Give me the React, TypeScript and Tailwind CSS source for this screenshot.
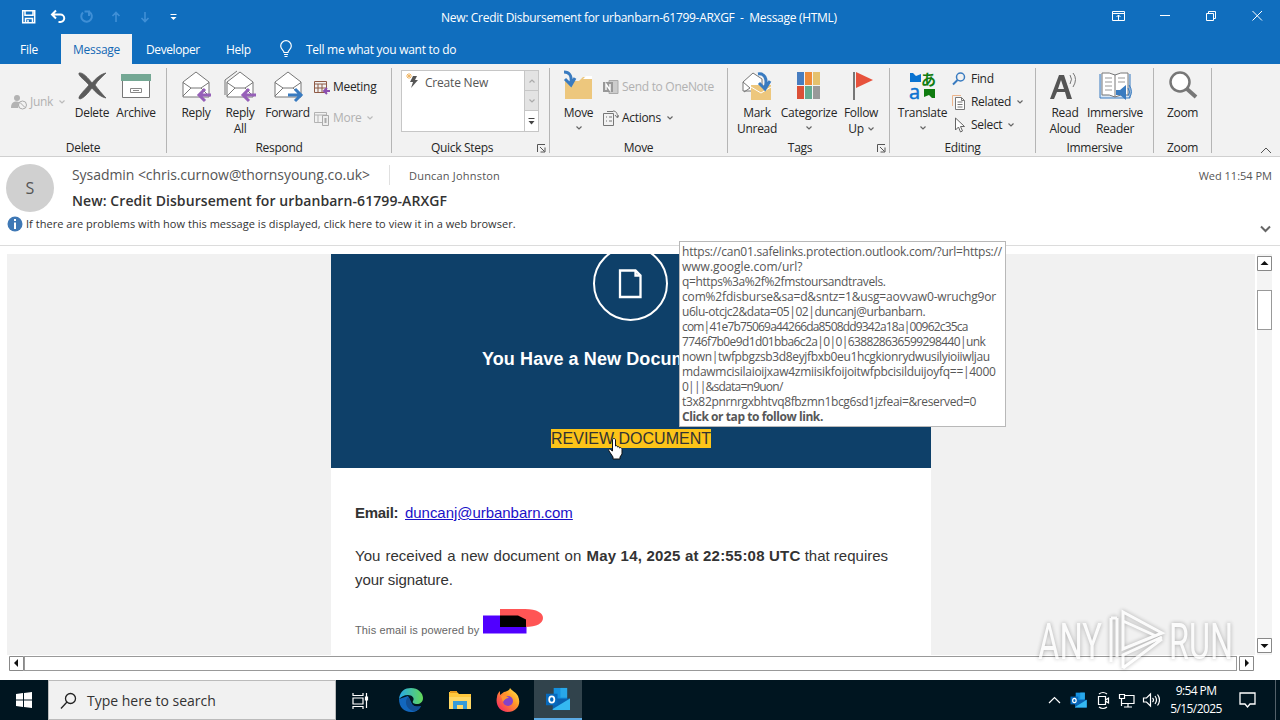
import type { ReactNode } from "react"
import clsx from "clsx"

function Caret({ className }: { className?: string }) {
  return (
    <svg width="6" height="4" viewBox="0 0 6 4" className={className} fill="none" stroke="currentColor" strokeWidth="1.2">
      <path d="M.5.5 3 3 5.5.5" />
    </svg>
  )
}

function Envelope() {
  return (
    <>
      <path d="M3 12 16 2l13 10v15H3z" fill="#fff" stroke="#777" />
      <path d="M3 12.5 11 18h10l8-5.5M3 26l8-8M29 26l-8-8" fill="none" stroke="#777" />
    </>
  )
}

function BigIcon({ children }: { children: ReactNode }) {
  return <svg width="32" height="32" viewBox="0 0 32 32" className="shrink-0 overflow-visible">{children}</svg>
}

function SmallIcon({ children }: { children: ReactNode }) {
  return <svg width="16" height="16" viewBox="0 0 16 16" className="shrink-0" fill="none">{children}</svg>
}

function BigButton({ icon, lines, width, caret }: { icon: ReactNode; lines: string[]; width: string; caret?: "below" | "inline" }) {
  return (
    <button className={clsx("flex shrink-0 flex-col items-center pt-1.5", width)}>
      <BigIcon>{icon}</BigIcon>
      <span className="mt-[3px] flex flex-col items-center whitespace-nowrap leading-4">
        {lines.map((line, i) => (
          <span key={line} className="flex items-center gap-1">
            {line}
            {caret === "inline" && i === lines.length - 1 && <Caret className="text-[#666]" />}
          </span>
        ))}
      </span>
      {caret === "below" && <Caret className="mt-[5px] text-[#666]" />}
    </button>
  )
}

function SmallButton({ icon, label, caret, disabled }: { icon: ReactNode; label: string; caret?: boolean; disabled?: boolean }) {
  return (
    <button className={clsx("flex h-4 items-center gap-[3px] whitespace-nowrap", disabled && "text-[#b1b1b1]")}>
      <SmallIcon>{icon}</SmallIcon>
      {label}
      {caret && <Caret className={clsx("ml-[3px]", disabled ? "text-[#bbb]" : "text-[#666]")} />}
    </button>
  )
}

function Group({ label, width, children, launcher }: { label: string; width: string; children: ReactNode; launcher?: boolean }) {
  return (
    <>
      <section className={clsx("flex h-[92px] shrink-0 flex-col", width)}>
        <div className="flex h-[76px] items-start">{children}</div>
        <div className="flex h-4 items-center">
          <span className={clsx("flex-1 text-center leading-4", launcher && "pr-[5px]")}>{label}</span>
          {launcher && (
            <svg width="9" height="9" viewBox="0 0 9 9" className="mr-[3px]" fill="none" stroke="#555">
              <path d="M.5 8V.5H8M3 3l4.5 4.5M8 3.5V8H3.5" />
            </svg>
          )}
        </div>
      </section>
      <div className="mt-1 h-[85px] w-px shrink-0 bg-[#b5b5b5]" />
    </>
  )
}

function TitleBar() {
  return (
    <div className="flex h-[34px] items-center pl-[21px] text-white">
      <svg width="160" height="18" viewBox="0 0 160 18" fill="none" stroke="#fff" strokeWidth="1.5">
        <path d="M1.7 2.7h12v12h-12zM4 2.7v4.5h8V2.7M4.5 14.5v-4h7v4M7 12v2" />
        <path d="M35 2.5 31 6.5l4 4M31 6.5h8.5a3.5 3.5 0 0 1 0 7.5h-2" strokeWidth="2" />
        <g stroke="#3f8fd6">
          <path d="M62 4.5a5.3 5.3 0 1 0 6.5-.5M68 8V3.5h-4.5" strokeWidth="2" />
          <path d="M95 14V4.5M91.5 8 95 4.5l3.5 3.5M124 4v9.5M120.500 10l3.500 3.500 3.500-3.500" strokeWidth="1.6" />
        </g>
        <path d="M149.500 6.500h6" strokeWidth="1" />
        <path d="m149.500 9 3 3 3-3z" fill="#fff" stroke="none" />
      </svg>
      <div className="mt-0.5 ml-[260px] whitespace-pre text-xs leading-4 tracking-[-0.3px]">New: Credit Disbursement for urbanbarn-61799-ARXGF  -  Message (HTML)</div>
      <svg width="160" height="16" viewBox="0 0 160 16" className="-mt-1 mr-3 ml-auto" fill="none" stroke="#fff">
        <path d="M4.500 4.500h12v9h-12zM4.500 6.500h12M10.500 13V8M8.500 10l2-2 2 2" />
        <path d="M52 8.500h10M98.500 6.500h7v7h-7zM100.500 6V4.500h7v7H106M144.500 4l9.500 9.500M154 4l-9.500 9.500" />
      </svg>
    </div>
  )
}

function TabBar() {
  return (
    <div className="flex h-[30px] items-center text-xs tracking-[-0.28px] text-white">
      <span className="w-[61px] pt-px pl-5">File</span>
      <span className="flex h-full w-[71px] items-center justify-center bg-[#f2f2f2] pt-px text-[#1368b4]">Message</span>
      <span className="w-[94px] pt-px pl-3.5 tracking-[-0.4px]">Developer</span>
      <span className="w-[53px] pt-px">Help</span>
      <svg width="14" height="18" viewBox="0 0 14 18" fill="none" stroke="#fff" strokeWidth="1.2">
        <path d="M5 12.5c0-2-3.300-3-3.300-6.500a5.300 5.300 0 0 1 10.600 0c0 3.500-3.300 4.500-3.300 6.500zM5 14.500h4M5.500 16.500h3" />
      </svg>
      <span className="ml-[13px] pt-px">Tell me what you want to do</span>
    </div>
  )
}

const people = (
  <>
    <circle cx="6" cy="4" r="3" fill="#b3b3b3" />
    <path d="M0 14c0-5 2-6.500 6-6.500l3 1-2 5.500z" fill="#b3b3b3" />
    <circle cx="11.500" cy="11" r="4" fill="#f2f2f2" stroke="#aaa" />
    <path d="m9 8.500 5 5" stroke="#aaa" />
  </>
)

function Ribbon() {
  return (
    <div className="flex h-[93px] border-b border-[#d0d0d0] bg-[#f2f2f2] text-xs tracking-[-0.3px] text-[#262626]">
      <Group label="Delete" width="w-[166px]">
        <div className="w-[70px] pt-[30px] pl-[11px]">
          <SmallButton icon={people} label="Junk" caret disabled />
        </div>
        <BigButton width="w-11" lines={["Delete"]} icon={<path d="M3 3c4-1 9 5 13 10C20 8 25 4 30 3c-4 4-8 7-11 12 3 4 7 9 11 13-5-1-10-5-14-10C12 23 8 28 4 29c-4-1 5-9 9-14C9 10 2 6 3 3z" fill="#5b5b5b" stroke="#5b5b5b" strokeWidth=".8" />} />
        <BigButton width="w-11" lines={["Archive"]} icon={<><path d="M2.500 9.500h27v18h-27z" fill="#fff" stroke="#777" /><path d="M1 4h30v7H1z" fill="#74a894" /><path d="M10.500 18.500h11v4h-11zM13 20.500h6" fill="none" stroke="#888" /></>} />
      </Group>
      <Group label="Respond" width="w-[224px]">
        <div className="flex pl-[7px]">
          <BigButton width="w-11" lines={["Reply"]} icon={<><Envelope /><path d="M31 25H19m6-6-6 6 6 6" stroke="#9660b8" strokeWidth="3" fill="none" /></>} />
          <BigButton width="w-11" lines={["Reply", "All"]} icon={<><path d="M1 25V10L13 1" stroke="#777" fill="none" /><Envelope /><path d="M32 25H19m6-6-6 6 6 6" stroke="#9660b8" strokeWidth="3" fill="none" /></>} />
          <BigButton width="w-[51px]" lines={["Forward"]} icon={<><Envelope /><path d="M16 25h13m-6-6 6 6-6 6" stroke="#397bc0" strokeWidth="3" fill="none" /></>} />
        </div>
        <div className="flex flex-col gap-[15px] pt-[15px] pl-px">
          <SmallButton label="Meeting" icon={<><path d="M.5 2.500h12v11H.5zM.5 5h12M4 5v8M8 5v8M1 9h11" stroke="#8e5a45" /><path d="M16 12h-6m3-3-3 3 3 3" stroke="#8c4fb0" strokeWidth="2" /></>} />
          <SmallButton label="More" caret disabled icon={<><path d="M.5 2.500h12v10H.5zM.5 5h12M4 5v7" stroke="#b3b3b3" /><path d="M8.500 5.500h6v10h-6z" fill="#eee" stroke="#aaa" /><path d="M10.500 8h2v5h-2z" fill="#aaa" /></>} />
        </div>
      </Group>
      <Group label="Quick Steps" width="w-[157px]" launcher>
        <div className="mt-1.5 ml-[9px] flex h-[62px] w-[138px] border border-[#c6c6c6] bg-white">
          <div className="flex h-[23px] flex-1 items-center gap-1.5 pl-[3px] tracking-[-0.2px] text-[#555]">
            <svg width="14" height="17" viewBox="0 0 14 17" className="-mt-1">
              <path d="M4 1v6M1 4h6M2 2l4 4M6 2 2 6" stroke="#efb565" />
              <path d="M8 4h4l-2 4h3l-7 8 2-6H5z" fill="#555" />
            </svg>
            Create New
          </div>
          <div className="flex w-3.5 flex-col border-l border-[#c6c6c6]">
            <span className="flex h-5 items-center justify-center border-b border-[#c6c6c6] bg-[#e3e3e3]"><Caret className="rotate-180 text-[#aaa]" /></span>
            <span className="flex h-5 items-center justify-center border-b border-[#c6c6c6] bg-[#e3e3e3]"><Caret className="text-[#aaa]" /></span>
            <svg width="13" height="20" viewBox="0 0 13 20"><path d="M3.500 7.500h6" stroke="#444" /><path d="M3.500 10h6l-3 3.500z" fill="#444" /></svg>
          </div>
        </div>
      </Group>
      <Group label="Move" width="w-[177px]">
        <BigButton width="w-[53px] pl-1" lines={["Move"]} caret="below" icon={<><path d="M2 11h14l4-4h9v22H2z" fill="#edc77d" /><path d="m20 9 3-3h6v3z" fill="#fff" /><path d="M1 2c5 0 8 3 7 11M2 9l6 6 4-7" stroke="#397bc0" strokeWidth="3" fill="none" /></>} />
        <div className="flex flex-col gap-[15px] pt-[15px]">
          <SmallButton label="Send to OneNote" disabled icon={<><path d="M6 1.500h9v13H6z" fill="#ccc" stroke="#aaa" /><path d="M0 3h10v10H0z" fill="#999" /><path d="M3 11V5l4 6V5" stroke="#fff" strokeWidth="1.4" /></>} />
          <SmallButton label="Actions" caret icon={<><path d="M.5 3.500h10v12H.5zM3 7h1M3 11h1M6 7h3M6 11h3M4 1.500h6M10 1c3 0 4.500 2 4.500 6M12 5l2.500 3L16 5" stroke="#777" /></>} />
        </div>
      </Group>
      <Group label="Tags" width="w-[161px]" launcher>
        <div className="flex pl-1">
          <BigButton width="w-[50px]" lines={["Mark", "Unread"]} icon={<><path d="M2 12 12 3l9 6v12H2z" fill="#fff" stroke="#777" /><path d="m2 12 7 6-6 4" fill="none" stroke="#777" /><path d="M10 15h20v15H10z" fill="#edc77d" /><path d="m10 17 10 6 10-6" fill="none" stroke="#fff" /><path d="M17 4c6-1 10 4 7 14M18 13l6 6 5-8" stroke="#397bc0" strokeWidth="3" fill="none" /></>} />
          <BigButton width="w-[54px]" lines={["Categorize"]} caret="below" icon={<><path d="M4 2h7v13H4z" fill="#477dc0" /><path d="M12 2h7v13h-7z" fill="#ee8b3a" /><path d="M20 2h7v13h-7z" fill="#e5c16d" /><path d="M4 16h7v13H4z" fill="#db5037" /><path d="M12 16h7v13h-7z" fill="#65aa91" /><path d="M20 16h7v13h-7z" fill="#999" /></>} />
          <BigButton width="w-[50px]" lines={["Follow", "Up"]} caret="inline" icon={<><path d="M9 2v28" stroke="#777" strokeWidth="2" /><path d="m11 2 17 8-17 8z" fill="#e7523c" /></>} />
        </div>
      </Group>
      <Group label="Editing" width="w-[145px]">
        <BigButton width="w-[62px] pl-[3px]" lines={["Translate"]} caret="below" icon={<><path d="M3 3h3l3 3 5-2v8H3z" fill="#0a73d1" /><path d="M28 28h-3l-3-3-5 2v-8h11z" fill="#107c10" /><text x="2" y="29" fontSize="20" fill="#0a73d1" stroke="#0a73d1" strokeWidth=".5">a</text><text x="14" y="15" fontSize="15" fontWeight="bold" fill="#107c10" fontFamily="Noto Sans CJK JP, sans-serif">あ</text></>} />
        <div className="flex flex-col gap-[7px] pt-[7px]">
          <SmallButton label="Find" icon={<><circle cx="8.500" cy="6" r="4" stroke="#397bc0" strokeWidth="1.5" /><path d="M5.500 9 1 13.500" stroke="#397bc0" strokeWidth="2" /></>} />
          <SmallButton label="Related" caret icon={<><path d="M.5 12V1.500H9" stroke="#edb58d" /><path d="M3.500 3.500h6l3 3v9h-9zM9.500 3.500v3h3M5.500 8h5M5.500 10.500h5M5.500 13h5" fill="#fff" stroke="#777" /></>} />
          <SmallButton label="Select" caret icon={<path d="M3.500 1v12l3-3 2 5 2-1-2-4.500h4z" fill="#fff" stroke="#666" />} />
        </div>
      </Group>
      <Group label="Immersive" width="w-[117px]">
        <BigButton width="w-[55px] pl-[3px]" lines={["Read", "Aloud"]} icon={<><path d="M1 29 10 5h5l8 24h-5l-2-7H8l-3 7zm8-10h6l-3-9z" fill="#555" fillRule="evenodd" /><path d="M21 5q3 4 0 9M24 3q5 6 0 14" stroke="#777" fill="none" /></>} />
        <BigButton width="w-12" lines={["Immersive", "Reader"]} icon={<><path d="M1 4v24h30V4" fill="#d7e6f5" stroke="#397bc0" /><path d="M3 3q8-1 13 2 5-3 13-2v22q-8-1-13 2-5-3-13-2zM16 5v22" fill="#fff" stroke="#777" /><path d="M6 8h7M6 12h7M6 16h7M6 20h7M19 8h7M19 12h7" stroke="#999" /><path d="M17 20h4l6-5v15l-6-5h-4z" fill="#397bc0" /><path d="M29 18q3 4 0 8M30 15q5 7 0 13" fill="none" stroke="#397bc0" /></>} />
      </Group>
      <Group label="Zoom" width="w-[57px]">
        <BigButton width="w-[57px]" lines={["Zoom"]} icon={<><circle cx="13" cy="12" r="9.500" fill="#fff" stroke="#777" strokeWidth="2.5" /><path d="m20 19 9 8" stroke="#777" strokeWidth="4" /></>} />
      </Group>
      <svg width="12" height="7" viewBox="0 0 12 7" className="mr-2 mb-0.5 ml-auto self-end" fill="none" stroke="#555"><path d="m1 6 5-5 5 5" /></svg>
    </div>
  )
}

function MessageHeader() {
  return (
    <header className="flex h-[89px] flex-col border-b border-[#dcdcdc] text-[#555]">
      <div className="flex h-[57px] shrink-0 pt-[7px] pl-1.5">
        <div className="flex size-12 items-center justify-center rounded-full bg-[#d0d0d0] text-base text-[#555]">S</div>
        <div className="ml-[18px] flex-1">
          <div className="flex h-[22px] items-center">
            <span className="w-[317px] text-sm tracking-[-0.06px] whitespace-nowrap">Sysadmin &lt;chris.curnow@thornsyoung.co.uk&gt;</span>
            <span className="h-5 w-px bg-[#e0e0e0]" />
            <span className="ml-[19px] pt-0.5 text-[11px] tracking-[0.2px]">Duncan Johnston</span>
            <span className="mr-2 ml-auto pt-0.5 text-[11px]">Wed 11:54 PM</span>
          </div>
          <div className="mt-1 text-sm leading-[22px] font-semibold tracking-[0.08px] text-[#333]">New: Credit Disbursement for urbanbarn-61799-ARXGF</div>
        </div>
      </div>
      <div className="flex h-5 items-center gap-[3px] pl-[7px] text-[11px] tracking-[0.03px] text-[#333]">
        <svg width="16" height="16" viewBox="0 0 16 16" className="shrink-0"><circle cx="8" cy="8" r="7.5" fill="#3f78b5" /><path d="M8 6.500V13M8 3v2" stroke="#fff" strokeWidth="2" /></svg>
        <span>If there are problems with how this message is displayed, click here to view it in a web browser.</span>
        <svg width="11" height="8" viewBox="0 0 11 8" className="mt-2.5 mr-[9px] ml-auto" fill="none" stroke="#666" strokeWidth="2"><path d="m1 1.500 4.500 4.500L10 1.500" /></svg>
      </div>
    </header>
  )
}

function MessageBody() {
  return (
    <div className="h-full w-[600px] bg-white font-['Liberation_Sans',sans-serif] text-[#333]">
      <div className="flex h-[214px] flex-col items-center overflow-hidden bg-[#0e4069]">
        <svg width="76" height="76" viewBox="0 0 76 76" className="-mt-2 shrink-0" fill="none" stroke="#fff">
          <circle cx="37.5" cy="37.5" r="36.5" strokeWidth="2" />
          <path d="M27 24.500h15.500l5 5v21.500H27zM42.500 24.500v5h5" strokeWidth="2.3" />
        </svg>
        <div className="mt-[25px] w-full pl-[151px] text-lg leading-6 font-bold tracking-[0.1px] whitespace-nowrap text-white">You Have a New Document</div>
        <a className="mt-[58px] bg-[#fcc419] text-base leading-[19px] whitespace-nowrap text-[#333]">REVIEW DOCUMENT</a>
      </div>
      <div className="pt-[33px] pl-6">
        <div className="flex text-[15px] leading-6"><b className="w-[50px] tracking-[-0.3px]">Email:</b><a className="tracking-[-0.04px] text-[#1a10c8] underline">duncanj@urbanbarn.com</a></div>
        <div className="mt-[19px] text-[15px] leading-6 whitespace-nowrap">
          <p><span className="[word-spacing:1px]">You received a new document on </span><b className="tracking-[0.2px]">May 14, 2025 at 22:55:08 UTC</b><span> that requires</span></p>
          <p className="tracking-[-0.1px]">your signature.</p>
        </div>
        <div className="mt-4 flex items-end text-[11px] leading-4 text-[#666]">
          <span className="mb-px w-32 tracking-[0.14px] whitespace-nowrap">This email is powered by</span>
          <svg width="62" height="27" viewBox="0 0 62 27" className="mb-1">
            <path d="M0 7.500h43.500v18H0z" fill="#5000ff" />
            <path d="M17 1h25c12 0 18 4 18 9s-6 9-18 9H17z" fill="#ff5555" />
            <path d="M17 7.500h18l8 4V19H17z" fill="#000" />
          </svg>
        </div>
      </div>
    </div>
  )
}

const arrowPaths = {
  up: "M3.5 9h8l-4-4z",
  down: "M3.5 6h8l-4 4z",
  left: "M9 3v8L5 7z",
  right: "M6 3v8l4-4z",
}

function ScrollArrow({ dir }: { dir: keyof typeof arrowPaths }) {
  return (
    <svg width="15" height="15" viewBox="0 0 15 15" className="shrink-0">
      <path d="M.5.5h14v14H.5z" fill="#fff" stroke="#888" />
      <path d={arrowPaths[dir]} fill="#111" />
    </svg>
  )
}

function ReadingPane() {
  return (
    <>
      <div className="mt-2 ml-[7px] flex h-[401px]">
        <div className="flex w-[1248px] overflow-hidden bg-[#f1f1f1] pl-[324px]"><MessageBody /></div>
        <div className="ml-0.5 flex w-[15px] flex-col bg-[#f4f4f4] pt-0.5">
          <ScrollArrow dir="up" />
          <div className="mt-[19px] h-10 border border-[#999] bg-white" />
          <div className="mt-auto mb-0.5 h-[15px]"><ScrollArrow dir="down" /></div>
        </div>
      </div>
      <div className="flex h-[25px] items-start pt-px pl-[9px]">
        <ScrollArrow dir="left" />
        <div className="mr-0.5 h-[15px] w-[1213px] border border-[#999] bg-white" />
        <ScrollArrow dir="right" />
      </div>
    </>
  )
}

const urlLines = [
  { text: "https://can01.safelinks.protection.outlook.com/?url=https://", spacing: "tracking-[-0.22px]" },
  { text: "www.google.com/url?", spacing: "tracking-normal" },
  { text: "q=https%3a%2f%2fmstoursandtravels.", spacing: "tracking-[-0.38px]" },
  { text: "com%2fdisburse&sa=d&sntz=1&usg=aovvaw0-wruchg9or", spacing: "tracking-[-0.16px]" },
  { text: "u6lu-otcjc2&data=05|02|duncanj@urbanbarn.", spacing: "tracking-[-0.44px]" },
  { text: "com|41e7b75069a44266da8508dd9342a18a|00962c35ca", spacing: "tracking-[-0.82px]" },
  { text: "7746f7b0e9d1d01bba6c2a|0|0|638828636599298440|unk", spacing: "tracking-[-0.62px]" },
  { text: "nown|twfpbgzsb3d8eyjfbxb0eu1hcgkionrydwusilyioiiwljau", spacing: "tracking-[-0.36px]" },
  { text: "mdawmcisilaioijxaw4zmiisikfoijoitwfpbcisilduijoyfq==|4000", spacing: "tracking-[-0.28px]" },
  { text: "0|||&sdata=n9uon/", spacing: "tracking-[-0.76px]" },
  { text: "t3x82pnrnrgxbhtvq8fbzmn1bcg6sd1jzfeai=&reserved=0", spacing: "tracking-[-0.35px]" },
]

function LinkTooltip() {
  return (
    <div className="absolute top-[241px] left-[679px] h-[186px] w-[327px] border border-[#b8b8b8] bg-white pt-0.5 pl-0.5 text-xs leading-[15px] whitespace-nowrap text-[#575757]">
      {urlLines.map(line => <div key={line.text} className={line.spacing}>{line.text}</div>)}
      <div className="font-bold tracking-[-0.43px]">Click or tap to follow link.</div>
    </div>
  )
}

function Watermark() {
  return (
    <svg width="200" height="64" viewBox="0 0 200 64" className="absolute top-[608px] left-[1036px] overflow-visible opacity-75 drop-shadow-[0_0_2px_#0006]" fill="none" stroke="#fff" strokeWidth="3">
      <text x="2" y="51" fontSize="50" textLength="64" lengthAdjust="spacingAndGlyphs" fill="#fff" stroke="none" fontFamily="Roboto, sans-serif">ANY</text>
      <text x="133" y="51" fontSize="50" textLength="64" lengthAdjust="spacingAndGlyphs" fill="#fff" stroke="none" fontFamily="Roboto, sans-serif">RUN</text>
      <path d="M87 4v37l39-16zM87 13l33 15M75 10v44M81 10v39M75 10h6M87 60V47l39-18M87 60l39-29" />
    </svg>
  )
}

function OutlookIcon() {
  return (
    <>
      <path d="M8 1h14v20H8z" fill="#1490df" />
      <path d="M15 1h7v10h-7z" fill="#28a8ea" />
      <path d="M7 12h18v12H7z" fill="#0a61b0" />
      <path d="m7 23 18-11v12H7z" fill="#35b8f1" />
      <path d="M0 7h12v12H0z" fill="#0669bc" />
      <ellipse cx="6" cy="13" rx="2.7" ry="3.3" fill="none" stroke="#fff" strokeWidth="1.8" />
    </>
  )
}

function Taskbar() {
  return (
    <footer className="flex h-10 items-center bg-[#001520] text-white">
      <div className="flex w-12 justify-center">
        <svg width="16" height="16" viewBox="0 0 16 16" fill="#fff"><path d="m0 2 7-1v6.500H0zM8 1l8-1v7.500H8zM0 8.500h7V15l-7-1zM8 8.500h8V16l-8-1z" /></svg>
      </div>
      <div className="flex h-full w-72 items-center gap-2.5 border border-[#bbb] bg-[#f1f1f1] pt-px pl-[11px] text-sm text-[#333]">
        <svg width="17" height="18" viewBox="0 0 17 18" fill="none" stroke="#222" strokeWidth="1.3"><circle cx="10.500" cy="6.500" r="5" /><path d="m7 10-6 6.500" /></svg>
        Type here to search
      </div>
      <div className="flex w-12 justify-center">
        <svg width="17" height="17" viewBox="0 0 17 17" fill="none" stroke="#fff" strokeWidth="1.2"><path d="M1 1v2.500h10V1M1 6h10v6H1zM1 17v-2.500h10V17M14.500 1v15M13.500 5h2v3h-2z" /></svg>
      </div>
      <div className="flex w-[54px] justify-center">
        <svg width="24" height="24" viewBox="0 0 24 24">
          <defs>
            <linearGradient id="edge" x1="0" y1="0" x2="1" y2="0"><stop stopColor="#26a9eb" /><stop offset="1" stopColor="#63d957" /></linearGradient>
          </defs>
          <path d="M0 11c0 8 5 13 12 13 5 0 8-2 10-6-3 1-7 1-9-2L9 8z" fill="#1267be" />
          <path d="M0 11C1 3 6 0 12 0c7 0 12 5 12 10 0 4-3 6-6 6-3 0-5-1-4-3 2-3-1-6-5-6-4 0-7 2-9 4z" fill="url(#edge)" />
          <path d="M9 9c-4 4-2 12 5 14 4 0 6-2 8-5-4 2-9 0-10-3-1-2 0-4-3-6z" fill="#124f94" />
        </svg>
      </div>
      <div className="flex w-11 justify-center">
        <svg width="22" height="20" viewBox="0 0 22 20"><path d="M0 2h8l2 2h12v15H0z" fill="#ffc83d" /><path d="M0 7h22v12H0z" fill="#ffd866" /><path d="M4 19v-8h14v8h-4v-4H8v4z" fill="#369bd8" /><path d="M1 1h7v2H1z" fill="#e69a1c" /></svg>
      </div>
      <div className="flex w-[52px] justify-center">
        <svg width="24" height="24" viewBox="0 0 24 24">
          <defs>
            <linearGradient id="fox" x1="1" y1="0" x2="0" y2="1"><stop stopColor="#fff44f" /><stop offset=".4" stopColor="#ff9a28" /><stop offset="1" stopColor="#f5156c" /></linearGradient>
          </defs>
          <path d="M14 0c2 3 6 4 8 8 4 9-2 16-10 16S-1 17 1 9c0-2 1-4 3-6v4l4-3c3-1 5-1 6-4z" fill="url(#fox)" />
          <circle cx="12" cy="13" r="5" fill="#8542c8" />
          <path d="M5 8c3-2 6 0 8 2-3 0-5 2-6 4z" fill="#ff9630" />
        </svg>
      </div>
      <div className="flex h-full w-12 items-center justify-center border-b-2 border-[#5cabe5] bg-[#31434c]">
        <svg width="24" height="24" viewBox="0 0 25 25"><OutlookIcon /></svg>
      </div>
      <div className="ml-auto flex items-center">
        <svg width="112" height="20" viewBox="0 0 112 20" fill="none" stroke="#fff" strokeWidth="1.2">
          <path d="m1 13 5.500-5.500L12 13" />
          <g transform="translate(22.500 2) scale(.65)" stroke="none"><OutlookIcon /></g>
          <path d="M50.500 6.500h7v8h-7zM57.500 10l3-2v5l-3-2M51 4q4-3 8 0M51 17q4 3 8 0" />
          <path d="M76 5.500h10v8H73.500V10M80 13.500V17M76 17h8M71.500 4.500h5v4h-5zM73.500 9v7" />
          <path d="M95.500 8h3l4-4v12l-4-4h-3zM104.500 8q2 2 0 4M107 6q3 4 0 8M109.500 4.500q4 5.500 0 11" />
        </svg>
        <div className="w-[68px] pl-1 text-center text-xs leading-[18px] tracking-[-0.6px]">9:54 PM<br />5/15/2025</div>
        <svg width="18" height="17" viewBox="0 0 18 17" className="mr-[18px] ml-[11px]" fill="none" stroke="#fff" strokeWidth="1.3"><path d="M1 1h15v11h-5l-2.500 3L6 12H1z" /></svg>
        <div className="h-10 w-px bg-[#53616a]" />
        <div className="w-1" />
      </div>
    </footer>
  )
}

export default function App() {
  return (
    <div className="relative h-[720px] w-[1280px] overflow-hidden bg-white font-['Open_Sans','Noto_Sans',sans-serif]">
      <div className="bg-[#106ebe]">
        <TitleBar />
        <TabBar />
      </div>
      <Ribbon />
      <MessageHeader />
      <ReadingPane />
      <Taskbar />
      <LinkTooltip />
      <Watermark />
      <svg width="15" height="22" viewBox="0 0 15 22" className="absolute top-[438px] left-[608px]" fill="#fff" stroke="#111">
        <path d="M4.500 13V2c0-2 3-2 3 0v6c1-1 2 0 2 1 1-1 2 0 2 1 1-1 2.500 0 2.500 1.500V16l-2 3v2h-7v-2l-4-6c-1-2 1-3 2-1z" />
      </svg>
    </div>
  )
}
